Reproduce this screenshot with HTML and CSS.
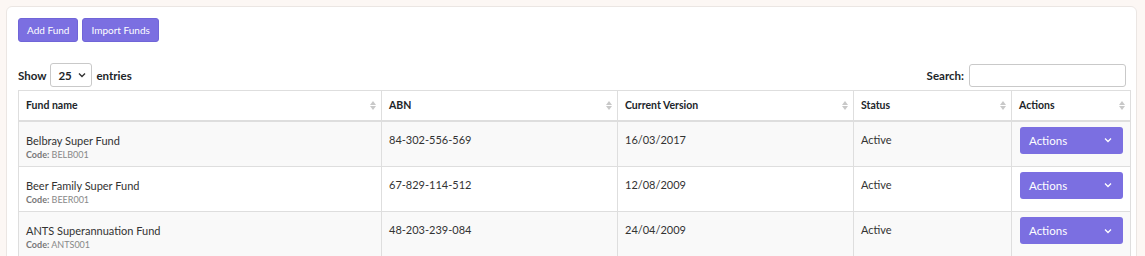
FILE: index.html
```html
<!DOCTYPE html>
<html>
<head>
    <title>Funds</title>
    <link rel="stylesheet" href="styles.css">
</head>
<body>
    <div class="card">
        <div class="toolbar">
            <button class="btn">Add Fund</button>
            <button class="btn">Import Funds</button>
        </div>

        <div class="table-controls">
            <div class="length">
                <span>Show</span>
                <div class="select">
                    <span>25</span>
                    <svg width="8" height="6" viewBox="0 0 8 6"><path d="M1 1.5 L4 4.5 L7 1.5" fill="none" stroke="#333" stroke-width="1.4"/></svg>
                </div>
                <span>entries</span>
            </div>
            <div class="search">
                <span>Search:</span>
                <input type="text">
            </div>
        </div>

        <table class="funds">
            <thead>
                <tr>
                    <th class="col-name"><div class="th-inner">Fund name <span class="sort"></span></div></th>
                    <th class="col-abn"><div class="th-inner">ABN <span class="sort"></span></div></th>
                    <th class="col-version"><div class="th-inner">Current Version <span class="sort"></span></div></th>
                    <th class="col-status"><div class="th-inner">Status <span class="sort"></span></div></th>
                    <th class="col-actions"><div class="th-inner">Actions <span class="sort"></span></div></th>
                </tr>
            </thead>
            <tbody>
                <tr>
                    <td><div class="fund-name">Belbray Super Fund</div><div class="fund-code"><b>Code:</b> BELB001</div></td>
                    <td>84-302-556-569</td>
                    <td>16/03/2017</td>
                    <td>Active</td>
                    <td class="actions-cell"><button class="btn-actions">Actions <svg width="10" height="6" viewBox="0 0 10 6"><path d="M2 1.5 L5 4.5 L8 1.5" fill="none" stroke="#fff" stroke-width="1.3"/></svg></button></td>
                </tr>
                <tr>
                    <td><div class="fund-name">Beer Family Super Fund</div><div class="fund-code"><b>Code:</b> BEER001</div></td>
                    <td>67-829-114-512</td>
                    <td>12/08/2009</td>
                    <td>Active</td>
                    <td class="actions-cell"><button class="btn-actions">Actions <svg width="10" height="6" viewBox="0 0 10 6"><path d="M2 1.5 L5 4.5 L8 1.5" fill="none" stroke="#fff" stroke-width="1.3"/></svg></button></td>
                </tr>
                <tr>
                    <td><div class="fund-name">ANTS Superannuation Fund</div><div class="fund-code"><b>Code:</b> ANTS001</div></td>
                    <td>48-203-239-084</td>
                    <td>24/04/2009</td>
                    <td>Active</td>
                    <td class="actions-cell"><button class="btn-actions">Actions <svg width="10" height="6" viewBox="0 0 10 6"><path d="M2 1.5 L5 4.5 L8 1.5" fill="none" stroke="#fff" stroke-width="1.3"/></svg></button></td>
                </tr>
            </tbody>
        </table>
    </div>
</body>
</html>
```

FILE: styles.css
```css
body {
    font-family: Lato, "Open Sans", Arial, sans-serif;
    font-size: 11px;
    color: #212529;
    background-color: #fcf7f4;
    margin: 0;
    padding: 6px 8px 0 6px;
    height: 250px;
    overflow: hidden;
}

.card {
    background-color: #fff;
    border: 1px solid #ebe6e3;
    border-radius: 6px;
    padding: 11px 6px 0 11px;
    height: 260px;
}

.toolbar {
    display: flex;
    gap: 4px;
}

.btn {
    font-family: inherit;
    font-size: 10px;
    color: #fff;
    background-color: #7b6fe1;
    border: 1px solid #7065d8;
    border-radius: 3px;
    height: 24px;
    padding: 0 8px;
    cursor: pointer;
}

.table-controls {
    display: flex;
    justify-content: space-between;
    align-items: center;
    margin-top: 21px;
    padding-right: 4px;
    font-weight: bold;
    font-size: 11.5px;
}

.length {
    display: flex;
    align-items: center;
    gap: 4px;
}

.select {
    display: flex;
    align-items: center;
    justify-content: space-between;
    width: 42px;
    height: 24px;
    box-sizing: border-box;
    border: 1px solid #c9c9c9;
    border-radius: 3px;
    padding: 0 5px 0 7px;
}

.search {
    display: flex;
    align-items: center;
    gap: 5px;
}

.search input {
    width: 157px;
    height: 23px;
    box-sizing: border-box;
    border: 1px solid #c9c9c9;
    border-radius: 3px;
}

.funds {
    width: 1112px;
    border-collapse: collapse;
    margin-top: 3px;
    table-layout: fixed;
}

.funds th,
.funds td {
    border: 1px solid #dedede;
    padding: 0 7px;
    text-align: left;
    box-sizing: border-box;
}

.funds th {
    height: 30px;
    font-weight: bold;
    font-size: 10.5px;
    border-bottom: 2px solid #dedede;
}

.col-name { width: 363px; }
.col-abn { width: 236px; }
.col-version { width: 236px; }
.col-status { width: 158px; }
.col-actions { width: 119px; }

.th-inner {
    display: flex;
    justify-content: space-between;
    align-items: center;
}

.sort {
    display: flex;
    flex-direction: column;
    gap: 1px;
    margin-right: -2px;
}

.sort::before,
.sort::after {
    content: "";
    border-left: 3px solid transparent;
    border-right: 3px solid transparent;
}

.sort::before {
    border-bottom: 4px solid #c8c8c8;
}

.sort::after {
    border-top: 4px solid #c8c8c8;
}

.funds td {
    height: 45.5px;
    vertical-align: top;
    padding-top: 11px;
    color: #333;
}

.funds tbody tr:nth-child(odd) {
    background-color: #f9f9f9;
}

.fund-name {
    line-height: 16px;
}

.fund-code {
    font-size: 9px;
    color: #888;
    line-height: 12px;
}

.fund-code b {
    color: #777;
}

.funds td.actions-cell {
    padding: 5px 8px 0 8px;
}

.btn-actions {
    display: flex;
    justify-content: space-between;
    align-items: center;
    width: 103px;
    height: 27px;
    font-family: inherit;
    font-size: 11.5px;
    color: #fff;
    background-color: #7b6fe1;
    border: none;
    border-radius: 3px;
    padding: 0 10px 0 9px;
    cursor: pointer;
}
```
